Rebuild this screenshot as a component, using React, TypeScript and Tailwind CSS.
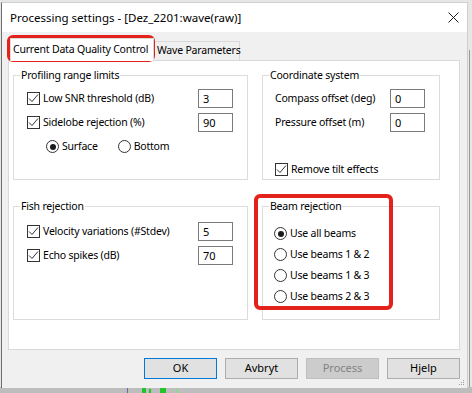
import React from 'react';

const font = { fontFamily: '"Noto Sans", "Open Sans", sans-serif' };

function Check() {
  return (
    <span className="flex h-[13px] w-[13px] shrink-0 items-center justify-center border border-[#333333] bg-white">
      <svg width="11" height="11" viewBox="0 0 11 11">
        <path d="M1 5.5 L4 8.5 L10 1.5" fill="none" stroke="#333333" strokeWidth="1" />
      </svg>
    </span>
  );
}

function Radio({ on }: { on?: boolean }) {
  return (
    <span className="flex h-[13px] w-[13px] shrink-0 items-center justify-center rounded-full border border-[#333333] bg-white">
      {on && <span className="h-[6px] w-[6px] rounded-full bg-[#1a1a1a]" />}
    </span>
  );
}

function Field({ value }: { value: string }) {
  return (
    <div className="h-[19px] w-[35px] shrink-0 border border-[#7a7a7a] bg-white pl-[4px] text-[11px] leading-[17px] tracking-normal text-black">
      {value}
    </div>
  );
}

function CheckRow({ label, value }: { label: string; value: string }) {
  return (
    <div className="flex h-[19px] items-center justify-between">
      <div className="flex items-center gap-[3px] whitespace-nowrap">
        <Check />
        <span>{label}</span>
      </div>
      <Field value={value} />
    </div>
  );
}

function Group({ title, className, inner, children }: { title: string; className: string; inner: string; children: React.ReactNode }) {
  return (
    <fieldset className={`border border-[#dcdcdc] ${className}`}>
      <legend className="ml-[6px] px-[1px] leading-[16px]">{title}</legend>
      <div className={inner}>{children}</div>
    </fieldset>
  );
}

function Button({ label, primary, disabled }: { label: string; primary?: boolean; disabled?: boolean }) {
  const cls = primary
    ? 'border-[#0078d7] bg-[#e1e1e1] text-black'
    : disabled
      ? 'border-[#bfbfbf] bg-[#cccccc] text-[#838383]'
      : 'border-[#adadad] bg-[#e1e1e1] text-black';
  return (
    <div className={`flex h-[21px] w-[73px] items-center justify-center border text-[11px] ${cls}`}>{label}</div>
  );
}

export default function App() {
  return (
    <div className="relative h-[393px] w-[472px] overflow-hidden bg-[#e6e6e6] text-[10.5px] tracking-[-0.2px] text-black" style={font}>
      {/* desktop behind the dialog */}
      <div className="absolute right-[2px] top-[50px] h-[343px] w-[1px] bg-[#9a9a9a]" />
      <div className="absolute bottom-0 left-0 h-[6px] w-[472px] bg-[#bdbdbd]" />
      <svg className="absolute bottom-0 left-[125px]" width="60" height="6" viewBox="0 0 60 6">
        <rect x="2" y="0" width="1" height="6" fill="#7b5fb0" />
        <rect x="17" y="1" width="4" height="5" fill="#22c42a" />
        <rect x="24" y="2" width="2" height="4" fill="#22c42a" />
        <rect x="35" y="1" width="6" height="5" fill="#22c42a" />
        <rect x="51" y="2" width="2" height="4" fill="#8fd88f" />
      </svg>

      {/* dialog window */}
      <div className="absolute left-[1px] top-[2px] flex h-[386px] w-[467px] flex-col border-l border-t border-r border-l-[#6f6f6f] border-t-[#cfcfcf] border-r-[#cfcfcf]">
        <div className="flex h-[29px] items-center justify-between bg-white pl-[8px] pr-[8px]">
          <span className="text-[11.5px] tracking-normal">Processing settings - [Dez_2201:wave(raw)]</span>
          <svg width="11" height="11" viewBox="0 0 11 11">
            <path d="M0.5 0.5 L10.5 10.5 M10.5 0.5 L0.5 10.5" stroke="#1a1a1a" strokeWidth="1" />
          </svg>
        </div>

        <div className="relative flex flex-1 flex-col bg-[#f0f0f0] pl-[6px] pr-[7px] pt-[6px]">
          {/* tabs */}
          <div className="flex h-[22px] items-end whitespace-nowrap pl-[2px]">
            <div className="z-10 -mb-[1px] flex h-[23px] w-[144px] items-center border border-b-0 border-[#d9d9d9] bg-white pl-[2px]">
              Current Data Quality Control
            </div>
            <div className="flex h-[19px] w-[86px] items-center border border-b-0 border-l-0 border-[#d9d9d9] bg-[#f0f0f0] pl-[3px]">
              Wave Parameters
            </div>
          </div>

          {/* tab panel */}
          <div className="grid h-[290px] grid-cols-[235px_178px] content-start gap-x-[14px] gap-y-[18px] border border-[#d9d9d9] bg-white pl-[4px] pt-[6px]">
            <Group title="Profiling range limits" className="h-[113px]" inner="flex flex-col gap-[5px] pl-[13px] pr-[14px] pt-[6px]">
              <CheckRow label="Low SNR threshold (dB)" value="3" />
              <CheckRow label="Sidelobe rejection (%)" value="90" />
              <div className="flex h-[19px] items-center gap-[20px] pl-[19px]">
                <div className="flex items-center gap-[3px]">
                  <Radio on />
                  <span>Surface</span>
                </div>
                <div className="flex items-center gap-[3px]">
                  <Radio />
                  <span>Bottom</span>
                </div>
              </div>
            </Group>

            <Group title="Coordinate system" className="h-[113px]" inner="flex flex-col gap-[5px] pl-[12px] pr-[14px] pt-[6px]">
              <div className="flex h-[19px] items-center justify-between">
                <span>Compass offset (deg)</span>
                <Field value="0" />
              </div>
              <div className="flex h-[19px] items-center justify-between">
                <span>Pressure offset (m)</span>
                <Field value="0" />
              </div>
              <div className="mt-[23px] flex h-[19px] items-center gap-[3px]">
                <Check />
                <span>Remove tilt effects</span>
              </div>
            </Group>

            <Group title="Fish rejection" className="h-[122px]" inner="flex flex-col gap-[5px] pl-[13px] pr-[14px] pt-[8px]">
              <CheckRow label="Velocity variations (#Stdev)" value="5" />
              <CheckRow label="Echo spikes (dB)" value="70" />
            </Group>

            <Group title="Beam rejection" className="h-[122px]" inner="flex flex-col pl-[11px] pt-[9px]">
              {['Use all beams', 'Use beams 1 & 2', 'Use beams 1 & 3', 'Use beams 2 & 3'].map((b, i) => (
                <div key={b} className="flex h-[21px] items-center gap-[3px]">
                  <Radio on={i === 0} />
                  <span>{b}</span>
                </div>
              ))}
            </Group>
          </div>

          {/* buttons */}
          <div className="mt-[8px] flex justify-end gap-[8px] tracking-normal">
            <Button label="OK" primary />
            <Button label="Avbryt" />
            <Button label="Process" disabled />
            <Button label="Hjelp" />
          </div>

          <svg className="absolute bottom-[2px] right-[2px]" width="6" height="6" viewBox="0 0 6 6">
            <rect x="4" y="0" width="1" height="1" fill="#a0a0a0" />
            <rect x="2" y="2" width="1" height="1" fill="#a0a0a0" />
            <rect x="4" y="2" width="1" height="1" fill="#a0a0a0" />
            <rect x="0" y="4" width="1" height="1" fill="#a0a0a0" />
            <rect x="2" y="4" width="1" height="1" fill="#a0a0a0" />
            <rect x="4" y="4" width="1" height="1" fill="#a0a0a0" />
          </svg>
        </div>
      </div>

      {/* red annotation marks */}
      <div className="absolute left-[7px] top-[35px] h-[27px] w-[148px] rounded-[6px] border-[4px] border-[#e3231b]" />
      <div className="absolute left-[254px] top-[194px] h-[116px] w-[139px] rounded-[6px] border-[4px] border-[#e3231b]" />
    </div>
  );
}
